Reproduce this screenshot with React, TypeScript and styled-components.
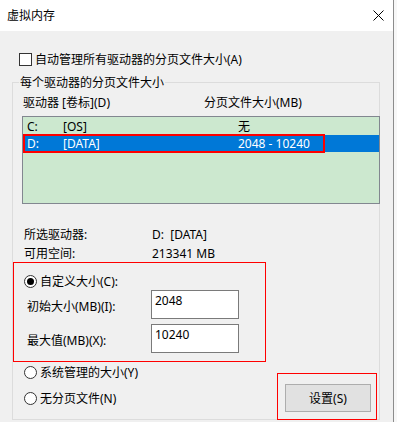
import styled, { createGlobalStyle } from 'styled-components';

const GlobalStyle = createGlobalStyle`
  html, body {
    margin: 0;
    padding: 0;
    background: #f7f7f7;
  }
  body {
    font-family: "Noto Sans", "Noto Sans CJK SC", sans-serif;
    font-size: 12px;
    color: #000;
  }
  * {
    box-sizing: border-box;
  }
`;

const Window = styled.div`
  width: 394px;
  height: 422px;
  overflow: hidden;
  background: #f0f0f0;
  border-right: 1px solid #8c8c8c;
`;

const TitleBar = styled.div`
  height: 31px;
  background: #fff;
  display: flex;
  align-items: center;
  justify-content: space-between;
  padding: 0 9px 0 7px;
  line-height: 17px;
`;

const Content = styled.div`
  padding: 20px 13px 0 12px;
`;

const CheckRow = styled.label`
  display: flex;
  align-items: center;
  gap: 3px;
  height: 17px;
  line-height: 17px;
  padding-left: 7px;
`;

const CheckBox = styled.span`
  width: 13px;
  height: 13px;
  border: 1px solid #333;
  background: #fff;
`;

const Group = styled.fieldset`
  margin: 6px 0 0;
  padding: 0;
  min-width: 0;
  border: 1px solid #dcdcdc;
`;

const Legend = styled.legend`
  margin-left: 6px;
  padding: 0 1px;
  line-height: 17px;
`;

const Header = styled.div`
  display: grid;
  grid-template-columns: 181px auto;
  margin-top: 3px;
  padding-left: 10px;
  line-height: 17px;
`;

const DriveList = styled.div`
  position: relative;
  margin: 5px 0 0 9px;
  width: 358px;
  height: 88px;
  padding-top: 1px;
  border: 1px solid #828790;
  background: #cce8cf;
`;

const DriveRow = styled.div<{ $selected?: boolean }>`
  position: relative;
  display: grid;
  grid-template-columns: 36px 175px 1fr;
  height: 17px;
  line-height: 17px;
  padding-left: 4px;
  background: ${(p) => (p.$selected ? '#0078d7' : 'transparent')};
  color: ${(p) => (p.$selected ? '#fff' : '#000')};
`;

const RowMark = styled.span`
  position: absolute;
  top: -1px;
  left: 0;
  width: 302px;
  height: 19px;
  border: 2px solid #f00;
`;

const Info = styled.div`
  display: flex;
  flex-direction: column;
  gap: 2px;
  margin-top: 22px;
`;

const InfoRow = styled.div`
  display: grid;
  grid-template-columns: 128px 1fr;
  padding-left: 11px;
  line-height: 17px;
`;

const CustomBox = styled.div`
  width: 253px;
  height: 100px;
  padding: 10px 0 0 10px;
  border: 1px solid #f00;
`;

const RadioRow = styled.label`
  display: flex;
  align-items: center;
  gap: 3px;
  height: 17px;
  line-height: 17px;
`;

const Radio = styled.span<{ $checked?: boolean }>`
  display: flex;
  align-items: center;
  justify-content: center;
  width: 13px;
  height: 13px;
  border: 1px solid #333;
  border-radius: 50%;
  background: #fff;
  &::after {
    content: '';
    width: 7px;
    height: 7px;
    border-radius: 50%;
    background: ${(p) => (p.$checked ? '#000' : 'transparent')};
  }
`;

const FieldRow = styled.div`
  display: flex;
  align-items: flex-start;
  padding-left: 3px;
  & + & {
    margin-top: 5px;
  }
`;

const FieldLabel = styled.span`
  width: 124px;
  margin-top: 8px;
  line-height: 17px;
`;

const SizeInput = styled.input`
  width: 88px;
  height: 29px;
  margin: 0;
  padding: 1px 3px 9px;
  border: 1px solid #7a7a7a;
  background: #fff;
  font: inherit;
  line-height: 17px;
  color: #000;
  outline: none;
`;

const BottomRow = styled.div`
  display: flex;
  align-items: flex-start;
  margin-top: 2px;
`;

const RadioColumn = styled.div`
  display: flex;
  flex-direction: column;
  gap: 9px;
  padding-left: 11px;
`;

const ButtonBox = styled.div`
  width: 100px;
  height: 47px;
  margin: 9px 2px -1px auto;
  padding: 10px 0 0 7px;
  border: 1px solid #f00;
`;

const SetButton = styled.button`
  width: 86px;
  height: 28px;
  padding: 0;
  border: 1px solid #adadad;
  background: #e1e1e1;
  font: inherit;
  color: #000;
`;

const drives = [
  { letter: 'C:', label: '[OS]', size: '无' },
  { letter: 'D:', label: '[DATA]', size: '2048 - 10240', selected: true },
];

const App = () => {
  return (
    <>
      <GlobalStyle />
      <Window>
        <TitleBar>
          <span>虚拟内存</span>
          <svg width="11" height="11" viewBox="0 0 11 11">
            <path d="M0.5 0.5 L10.5 10.5 M10.5 0.5 L0.5 10.5" stroke="#000" strokeWidth="1" />
          </svg>
        </TitleBar>
        <Content>
          <CheckRow>
            <CheckBox />
            自动管理所有驱动器的分页文件大小(A)
          </CheckRow>
          <Group>
            <Legend>每个驱动器的分页文件大小</Legend>
            <Header>
              <span>驱动器 [卷标](D)</span>
              <span>分页文件大小(MB)</span>
            </Header>
            <DriveList>
              {drives.map((d) => (
                <DriveRow key={d.letter} $selected={d.selected}>
                  <span>{d.letter}</span>
                  <span>{d.label}</span>
                  <span>{d.size}</span>
                  {d.selected && <RowMark />}
                </DriveRow>
              ))}
            </DriveList>
            <Info>
              <InfoRow>
                <span>所选驱动器:</span>
                <span>D:&nbsp;&nbsp;[DATA]</span>
              </InfoRow>
              <InfoRow>
                <span>可用空间:</span>
                <span>213341 MB</span>
              </InfoRow>
            </Info>
            <CustomBox>
              <RadioRow>
                <Radio $checked />
                自定义大小(C):
              </RadioRow>
              <FieldRow>
                <FieldLabel>初始大小(MB)(I):</FieldLabel>
                <SizeInput defaultValue="2048" readOnly />
              </FieldRow>
              <FieldRow>
                <FieldLabel>最大值(MB)(X):</FieldLabel>
                <SizeInput defaultValue="10240" readOnly />
              </FieldRow>
            </CustomBox>
            <BottomRow>
              <RadioColumn>
                <RadioRow>
                  <Radio />
                  系统管理的大小(Y)
                </RadioRow>
                <RadioRow>
                  <Radio />
                  无分页文件(N)
                </RadioRow>
              </RadioColumn>
              <ButtonBox>
                <SetButton>设置(S)</SetButton>
              </ButtonBox>
            </BottomRow>
          </Group>
        </Content>
      </Window>
    </>
  );
};

export default App;
